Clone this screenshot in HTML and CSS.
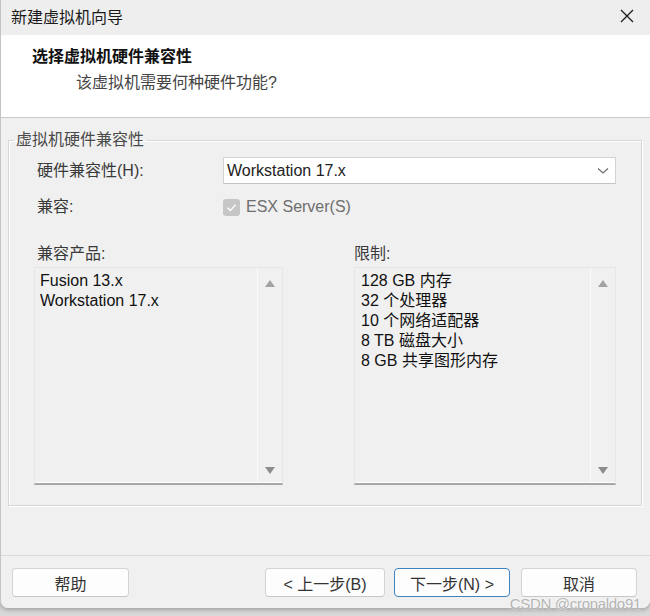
FILE: index.html
```html
<html>

<head>
  <title>新建虚拟机向导</title>
  <meta charset="utf-8">
  <link rel="stylesheet" href="styles.css">
</head>

<body>
  <div class="window">
    <div class="titlebar">
      <span class="title">新建虚拟机向导</span>
      <svg class="close" width="16" height="16" viewBox="0 0 16 16">
        <path d="M2 2 L14 14 M14 2 L2 14" stroke="#1a1a1a" stroke-width="1.3" fill="none" />
      </svg>
    </div>

    <div class="header">
      <h1>选择虚拟机硬件兼容性</h1>
      <p>该虚拟机需要何种硬件功能?</p>
    </div>

    <div class="content">
      <fieldset class="group">
        <legend>虚拟机硬件兼容性</legend>
        <div class="row">
          <label class="label">硬件兼容性(H):</label>
          <div class="combo">
            <span>Workstation 17.x</span>
            <svg width="12" height="8" viewBox="0 0 12 8">
              <path d="M1 1.5 L6 6 L11 1.5" stroke="#6a6a6a" stroke-width="1.1" fill="none" />
            </svg>
          </div>
        </div>
        <div class="row row-check">
          <label class="label">兼容:</label>
          <span class="check">
            <svg width="17" height="17" viewBox="0 0 17 17">
              <path d="M4.5 8.8 L7.4 11.6 L12.6 5.6" stroke="#fff" stroke-width="1.4" fill="none" />
            </svg>
          </span>
          <span class="check-text">ESX Server(S)</span>
        </div>

        <div class="lists">
          <div class="col col-left">
            <div class="cap">兼容产品:</div>
            <div class="listbox">
              <ul class="items">
                <li>Fusion 13.x</li>
                <li>Workstation 17.x</li>
              </ul>
              <div class="scroll">
                <span class="arrow up"></span>
                <span class="arrow down"></span>
              </div>
            </div>
          </div>
          <div class="col col-right">
            <div class="cap">限制:</div>
            <div class="listbox">
              <ul class="items">
                <li>128 GB 内存</li>
                <li>32 个处理器</li>
                <li>10 个网络适配器</li>
                <li>8 TB 磁盘大小</li>
                <li>8 GB 共享图形内存</li>
              </ul>
              <div class="scroll">
                <span class="arrow up"></span>
                <span class="arrow down"></span>
              </div>
            </div>
          </div>
        </div>
      </fieldset>
    </div>

    <div class="footer">
      <button class="btn">帮助</button>
      <span class="spacer"></span>
      <button class="btn btn-back">&lt; 上一步(B)</button>
      <button class="btn btn-next">下一步(N) &gt;</button>
      <button class="btn btn-cancel">取消</button>
    </div>
  </div>
  <div class="watermark">CSDN @cronaldo91</div>
</body>

</html>
```

FILE: styles.css
```css
* {
  margin: 0;
  padding: 0;
  box-sizing: border-box;
}

li {
  list-style: none;
}

body {
  position: relative;
  width: 650px;
  height: 616px;
  overflow: hidden;
  background: #d8d8d8;
  font-family: "Liberation Sans", "Noto Sans CJK SC", sans-serif;
  font-size: 16px;
  color: #222;
}

.window {
  display: flex;
  flex-direction: column;
  width: 650px;
  height: 608px;
  background: #f0f0f0;
  border-left: 1px solid #c4c4c4;
  border-radius: 0 0 8px 8px;
  box-shadow: 0 2px 4px rgba(0, 0, 0, .25);
  overflow: hidden;
}

.titlebar {
  display: flex;
  align-items: center;
  justify-content: space-between;
  height: 35px;
  padding: 0 15px 3px 10px;
  background: #eeeeee;
}

.title {
  font-family: "Noto Sans CJK SC", sans-serif;
  font-size: 16px;
  line-height: 20px;
  color: #1a1a1a;
}

.header {
  height: 83px;
  padding: 12px 0 0 31px;
  background: #fff;
  border-bottom: 1px solid #c9c9c9;
}

.header h1 {
  font-size: 16px;
  font-weight: bold;
  line-height: 20px;
  color: #111;
}

.header p {
  margin: 6px 0 0 44px;
  line-height: 20px;
  color: #444;
}

.content {
  flex: 1;
  padding: 12px 8px 0 7px;
  border-bottom: 1px solid #dadada;
}

.group {
  height: 376px;
  padding: 7px 25px 0 5px;
  border: 1px solid #d6d6d6;
  box-shadow: inset 1px 1px 0 #fff, 1px 1px 0 #fff;
}

.group legend {
  padding: 0 2px;
  line-height: 20px;
  color: #4a4a4a;
}

.row {
  display: flex;
  align-items: center;
  padding-left: 23px;
}

.label {
  width: 186px;
  line-height: 20px;
  color: #3a3a3a;
}

.combo {
  display: flex;
  align-items: center;
  justify-content: space-between;
  flex: 1;
  height: 27px;
  padding: 0 6px 0 3px;
  background: #fff;
  border: 1px solid #d3d3d3;
  border-bottom-color: #c4c4c4;
}

.row-check {
  margin-top: 13px;
}

.check {
  display: flex;
  width: 17px;
  height: 17px;
  background: #c6c6c6;
  border-radius: 3px;
}

.check-text {
  margin-left: 6px;
  line-height: 20px;
  color: #6e6e6e;
}

.lists {
  display: flex;
  justify-content: space-between;
  margin-top: 27px;
  padding-left: 20px;
}

.col-left {
  width: 249px;
}

.col-right {
  width: 262px;
}

.cap {
  padding-left: 3px;
  line-height: 20px;
  color: #3a3a3a;
}

.col-right .cap {
  padding-left: 0;
}

.listbox {
  display: flex;
  height: 218px;
  margin-top: 3px;
  border: 1px solid #e6e6e6;
  border-bottom: 2px solid #a8a8a8;
  box-shadow: inset 0 -1px 0 #fff;
}

.items {
  flex: 1;
  padding: 3px 0 0 5px;
  border-right: 1px solid #fbfbfb;
}

.col-right .items {
  padding-left: 6px;
}

.items li {
  line-height: 20px;
  color: #111;
}

.scroll {
  display: flex;
  flex-direction: column;
  justify-content: space-between;
  align-items: center;
  width: 24px;
  padding: 12px 0 9px;
}

.arrow {
  width: 0;
  height: 0;
  border-left: 5px solid transparent;
  border-right: 5px solid transparent;
}

.arrow.up {
  border-bottom: 7px solid #a3a3a3;
}

.arrow.down {
  border-top: 7px solid #8c8c8c;
}

.footer {
  display: flex;
  align-items: flex-start;
  height: 52px;
  padding: 12px 13px 0 11px;
  background: #f0f0f0;
}

.spacer {
  flex: 1;
}

.btn {
  width: 117px;
  height: 29px;
  background: #fdfdfd;
  border: 1px solid #d4d4d4;
  border-bottom-color: #c6c6c6;
  border-radius: 4px;
  font-family: "Liberation Sans", "Noto Sans CJK SC", sans-serif;
  font-size: 16px;
  color: #333;
}

.btn-back {
  width: 120px;
}

.btn-next {
  width: 116px;
  margin-left: 9px;
  border: 1px solid #3f83c4;
}

.btn-cancel {
  width: 116px;
  margin-left: 11px;
}

.watermark {
  position: absolute;
  right: 9px;
  bottom: 4px;
  font-size: 15px;
  color: #b4b4b4;
  text-shadow: 0 0 2px #fff;
  letter-spacing: -0.3px;
}
```
